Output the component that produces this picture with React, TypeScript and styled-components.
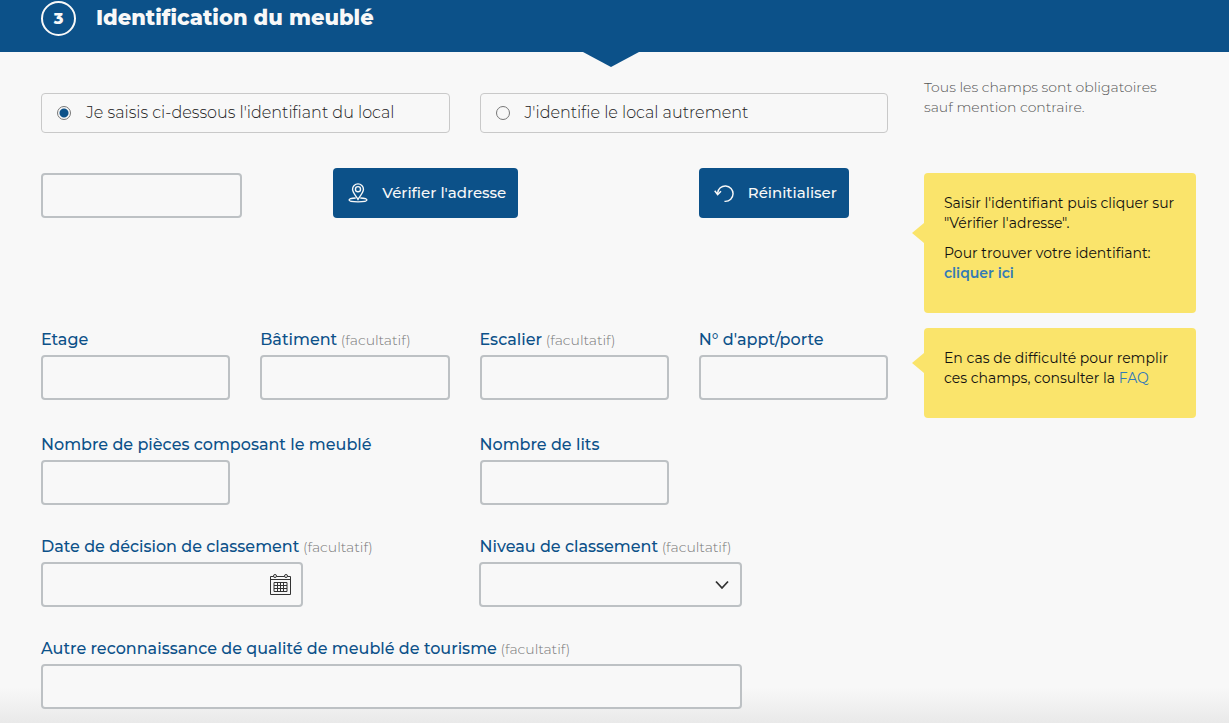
import React, { useState } from "react";
import styled, { createGlobalStyle } from "styled-components";

const blue = "#0c5189";

const GlobalStyle = createGlobalStyle`
  *, *::before, *::after { box-sizing: border-box; }
  body {
    margin: 0;
    background: #f8f8f8;
    font-family: Montserrat, Inter, "Open Sans", sans-serif;
    font-size: 16px;
    line-height: 20px;
    color: #222;
  }
  input, select, button { font: inherit; }
`;

const Page = styled.div`
  min-height: 100vh;
  padding-bottom: 14px;
  background: linear-gradient(to top, #e9e9e9 0, #f8f8f8 36px);
`;

const Header = styled.header`
  padding: 0 33px 0 26px;
  background: ${blue};
  color: #f8f8f8;
`;

const HeaderInner = styled.div`
  position: relative;
  display: flex;
  gap: 20px;
  padding: 1px 15px 16px;

  &::after {
    content: "";
    position: absolute;
    top: 100%;
    left: 50%;
    margin-left: -28px;
    border: solid transparent;
    border-width: 15px 28px 0;
    border-top-color: ${blue};
  }
`;

const StepNumber = styled.span`
  display: flex;
  align-items: center;
  justify-content: center;
  width: 35px;
  height: 35px;
  border: 2px solid #f8f8f8;
  border-radius: 50%;
  font-weight: 800;
`;

const Title = styled.h1`
  margin: 0;
  font-size: 21px;
  line-height: 34px;
  font-weight: 800;
`;

const Content = styled.main`
  display: grid;
  grid-template-columns: minmax(0, 1fr) 272px;
  gap: 36px;
  padding: 25px 33px 0 41px;
`;

const Form = styled.form`
  padding-top: 16px;
`;

const Row = styled.div<{ $gap: number }>`
  display: grid;
  grid-template-columns: repeat(12, minmax(0, 1fr));
  column-gap: 30px;
  align-items: end;
  margin-bottom: ${(p) => p.$gap}px;
`;

const Cell = styled.div<{ $start: number; $span: number }>`
  grid-column: ${(p) => p.$start} / span ${(p) => p.$span};
`;

const Choice = styled.label`
  display: flex;
  align-items: center;
  gap: 15px;
  height: 40px;
  padding: 0 15px;
  border: 1px solid #c9c9c9;
  border-radius: 4px;
  background: #f8f8f8;
  font-weight: 300;
  white-space: nowrap;
`;

const Radio = styled.input`
  appearance: none;
  flex: none;
  width: 14px;
  height: 14px;
  margin: 0;
  border: 1px solid #777;
  border-radius: 50%;

  &:checked {
    background: radial-gradient(circle, ${blue} 4px, transparent 5px);
  }
`;

const Label = styled.label`
  display: block;
  margin-bottom: 5px;
  color: ${blue};
  font-weight: 500;
  white-space: nowrap;
`;

const Optional = styled.span`
  color: #777;
  font-size: 14px;
  font-weight: 300;
`;

const TextInput = styled.input`
  display: block;
  width: 100%;
  height: 45px;
  padding: 0 12px;
  border: 2px solid #bdc1c4;
  border-radius: 4px;
  outline: none;
  background: #f8f8f8;
  color: #333;
`;

const IdentifierInput = styled(TextInput)`
  width: 201px;
`;

const Select = styled(TextInput).attrs({ as: "select" })`
  appearance: none;
`;

const ControlWrap = styled.div`
  position: relative;
`;

const ControlIcon = styled.svg`
  position: absolute;
  top: 50%;
  right: 12px;
  transform: translateY(-50%);
  pointer-events: none;
`;

const Button = styled.button`
  display: inline-flex;
  align-items: center;
  gap: 14px;
  height: 50px;
  padding: 0 12px 0 15px;
  border: 0;
  border-radius: 4px;
  background: ${blue};
  color: #f8f8f8;
  font-size: 15px;
  font-weight: 500;
  white-space: nowrap;
`;

const Aside = styled.aside`
  font-size: 14px;
`;

const Mention = styled.p`
  max-width: 250px;
  margin: 0 0 56px;
  color: #555;
  font-weight: 300;
`;

const Note = styled.div<{ $arrow: number }>`
  position: relative;
  margin-bottom: 15px;
  padding: 20px;
  border-radius: 4px;
  background: #fae46b;
  color: #111;

  &::before {
    content: "";
    position: absolute;
    top: ${(p) => p.$arrow}px;
    right: 100%;
    border: solid transparent;
    border-width: 10px 12px 10px 0;
    border-right-color: #fae46b;
  }

  p {
    margin: 0 0 10px;
  }
`;

const NoteLink = styled.a<{ $strong?: boolean }>`
  color: #337ab7;
  font-weight: ${(p) => (p.$strong ? 600 : 400)};
  text-decoration: none;
`;

const PinIcon = () => (
  <svg width="20" height="20" viewBox="0 0 22 22" fill="none" stroke="currentColor" strokeWidth="1.5" aria-hidden="true">
    <path d="M11 18C8.800 14 5 10.600 5 7a6 6 0 0 1 12 0c0 3.600-3.800 7-6 11z" />
    <circle cx="11" cy="6.800" r="2.800" />
    <path d="M8.500 16.500C4.500 16.700 1.200 17.400 1.200 18.700c0 1.300 4 2 9.800 2s9.800-.7 9.800-2c0-1.300-3.300-2-7.300-2.200" />
  </svg>
);

const ResetIcon = () => (
  <svg width="20" height="20" viewBox="0 0 22 22" fill="none" stroke="currentColor" strokeWidth="1.600" aria-hidden="true">
    <path d="M4 12.200V11a8.500 8.500 0 1 1 8.500 9.200h-1" />
    <path d="M.8 8.500l3.200 4.200 3.700-3.700" />
  </svg>
);

const CalendarIcon = () => (
  <ControlIcon width="21" height="22" viewBox="0 0 21 22" fill="none" stroke="#333" strokeWidth="1" aria-hidden="true">
    <path d="M3.500 2.500h-3v18h20v-18h-3M6.500 2.500h8M.500 5.500h20" />
    <rect x="3.500" y=".500" width="3" height="3" rx="1.500" />
    <rect x="14.500" y=".500" width="3" height="3" rx="1.500" />
    <path d="M4 8.500h13v9H4zM7.500 8.500v9M10.500 8.500v9M13.500 8.500v9M4 11.500h13M4 14.500h13" />
  </ControlIcon>
);

const ChevronIcon = () => (
  <ControlIcon width="15" height="9" viewBox="0 0 15 9" fill="none" stroke="#333" strokeWidth="1.800" aria-hidden="true">
    <path d="M1 1l6 6.500 6-6.500" />
  </ControlIcon>
);

interface FieldProps {
  id: string;
  label: string;
  start: number;
  span: number;
  optional?: boolean;
  children?: React.ReactNode;
}

const Field = ({ id, label, start, span, optional, children }: FieldProps) => (
  <Cell $start={start} $span={span}>
    <Label htmlFor={id}>
      {label}
      {optional && <Optional> (facultatif)</Optional>}
    </Label>
    {children ?? <TextInput id={id} type="text" />}
  </Cell>
);

export default function App() {
  const [mode, setMode] = useState("identifiant");
  return (
    <>
      <GlobalStyle />
      <Page>
        <Header>
          <HeaderInner>
            <StepNumber>3</StepNumber>
            <Title>Identification du meublé</Title>
          </HeaderInner>
        </Header>
        <Content>
          <Form onSubmit={(e) => e.preventDefault()}>
            <Row $gap={35}>
              <Cell $start={1} $span={6}>
                <Choice>
                  <Radio type="radio" name="mode" checked={mode === "identifiant"} onChange={() => setMode("identifiant")} />
                  Je saisis ci-dessous l'identifiant du local
                </Choice>
              </Cell>
              <Cell $start={7} $span={6}>
                <Choice>
                  <Radio type="radio" name="mode" checked={mode === "autre"} onChange={() => setMode("autre")} />
                  J'identifie le local autrement
                </Choice>
              </Cell>
            </Row>
            <Row $gap={112}>
              <Cell $start={1} $span={4}>
                <IdentifierInput type="text" aria-label="Identifiant du local" />
              </Cell>
              <Cell $start={5} $span={4}>
                <Button type="button">
                  <PinIcon />
                  Vérifier l'adresse
                </Button>
              </Cell>
              <Cell $start={10} $span={3}>
                <Button type="reset">
                  <ResetIcon />
                  Réinitialiser
                </Button>
              </Cell>
            </Row>
            <Row $gap={35}>
              <Field id="etage" label="Etage" start={1} span={3} />
              <Field id="batiment" label="Bâtiment" start={4} span={3} optional />
              <Field id="escalier" label="Escalier" start={7} span={3} optional />
              <Field id="porte" label="N° d'appt/porte" start={10} span={3} />
            </Row>
            <Row $gap={32}>
              <Field id="pieces" label="Nombre de pièces composant le meublé" start={1} span={3} />
              <Field id="lits" label="Nombre de lits" start={7} span={3} />
            </Row>
            <Row $gap={32}>
              <Field id="date" label="Date de décision de classement" start={1} span={4} optional>
                <ControlWrap>
                  <TextInput id="date" type="text" />
                  <CalendarIcon />
                </ControlWrap>
              </Field>
              <Field id="niveau" label="Niveau de classement" start={7} span={4} optional>
                <ControlWrap>
                  <Select id="niveau" />
                  <ChevronIcon />
                </ControlWrap>
              </Field>
            </Row>
            <Row $gap={0}>
              <Field id="autre" label="Autre reconnaissance de qualité de meublé de tourisme" start={1} span={10} optional />
            </Row>
          </Form>
          <Aside>
            <Mention>Tous les champs sont obligatoires sauf mention contraire.</Mention>
            <Note $arrow={50}>
              <p>Saisir l'identifiant puis cliquer sur "Vérifier l'adresse".</p>
              <p>
                Pour trouver votre identifiant:
                <br />
                <NoteLink href="#identifiant" $strong>cliquer ici</NoteLink>
              </p>
            </Note>
            <Note $arrow={25}>
              <p>
                En cas de difficulté pour remplir ces champs, consulter la <NoteLink href="#faq">FAQ</NoteLink>
              </p>
            </Note>
          </Aside>
        </Content>
      </Page>
    </>
  );
}
